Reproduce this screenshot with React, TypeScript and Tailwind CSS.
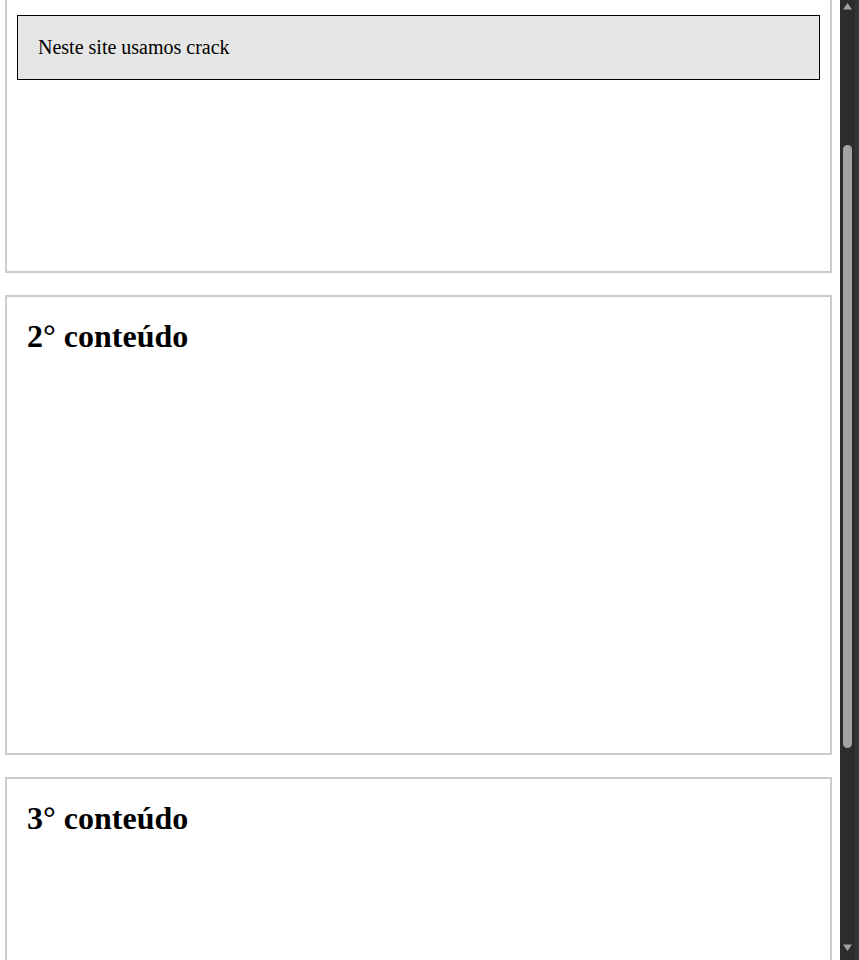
import React from "react";

export default function App() {
  return (
    <div className="flex h-[960px] w-[859px] overflow-hidden bg-white font-['Liberation_Serif','Times_New_Roman',serif] text-[20px] text-black">
      <div className="flex w-[840px] shrink-0 flex-col gap-[22px] pl-[5px]">
        <div className="box-border h-[273px] w-[827px] shrink-0 border-2 border-t-0 border-[#cccccc] px-[10px] pt-[15px]">
          <div className="border border-black bg-[#e6e6e6] px-[20px] py-[20px] leading-[23px]">
            Neste site usamos crack
          </div>
        </div>
        <div className="box-border h-[460px] w-[827px] shrink-0 border-2 border-[#cccccc] p-[20px]">
          <h2 className="m-0 text-[32px] font-bold leading-[38px]">2° conteúdo</h2>
        </div>
        <div className="box-border h-[460px] w-[827px] shrink-0 border-2 border-[#cccccc] p-[20px]">
          <h2 className="m-0 text-[32px] font-bold leading-[38px]">3° conteúdo</h2>
        </div>
      </div>
      <div className="flex h-[960px] w-[19px] shrink-0">
        <div className="flex w-[15px] flex-col bg-[#2c2c2c] pt-[3px]">
          <svg width="9" height="7" viewBox="0 0 9 7" className="ml-[3px] block">
            <polygon points="4.5,0 9,6.5 0,6.5" fill="#a0a0a0" />
          </svg>
          <div className="ml-[3px] mt-[135px] h-[603px] w-[9px] rounded-full bg-[#a3a3a3]" />
          <svg width="9" height="7" viewBox="0 0 9 7" className="ml-[3px] mt-[196px] block">
            <polygon points="0,0.5 9,0.5 4.5,7" fill="#a0a0a0" />
          </svg>
        </div>
        <div className="w-[4px] bg-[#353535]" />
      </div>
    </div>
  );
}
